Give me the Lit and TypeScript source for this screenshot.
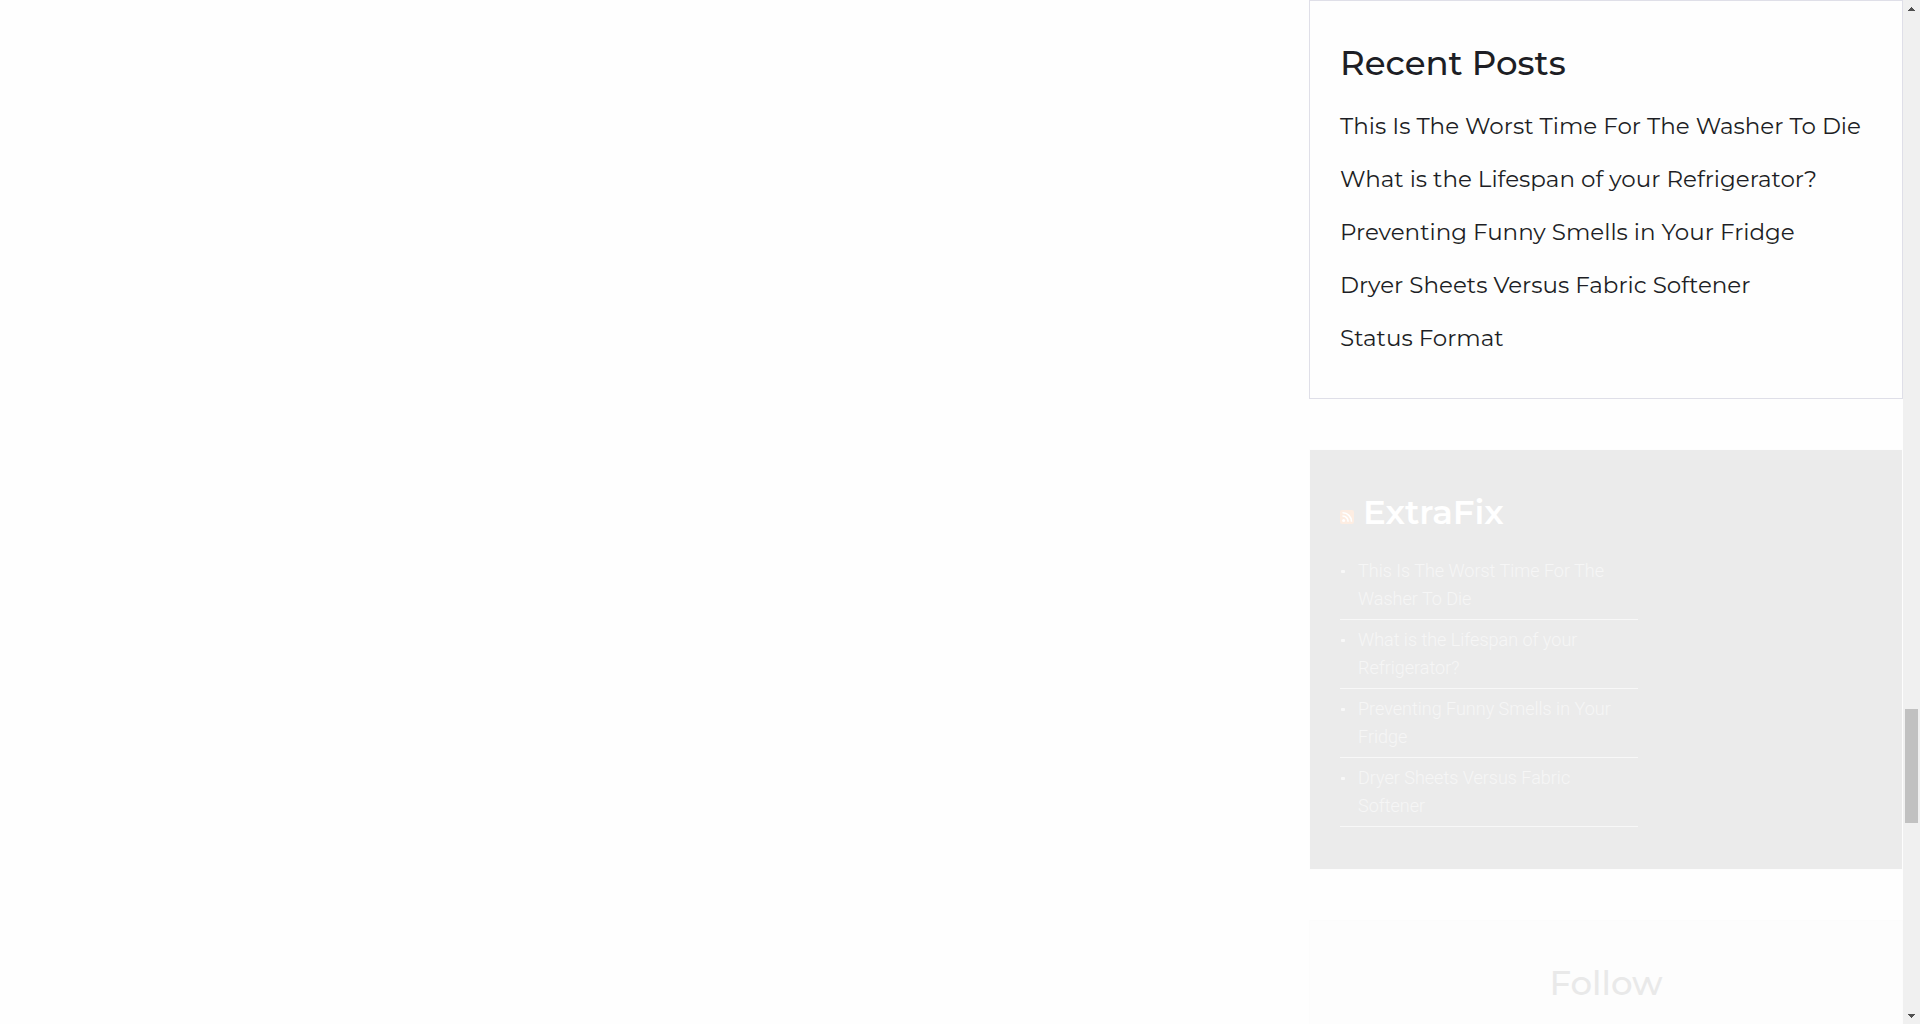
import { LitElement, html, css } from "lit";
import { customElement } from "lit/decorators.js";

const POSTS = [
  "This Is The Worst Time For The Washer To Die",
  "What is the Lifespan of your Refrigerator?",
  "Preventing Funny Smells in Your Fridge",
  "Dryer Sheets Versus Fabric Softener",
  "Status Format",
];

@customElement("scroll-rail")
export class ScrollRail extends LitElement {
  static styles = css`
    :host {
      display: flex;
      flex-direction: column;
      width: 17px;
      background: #f0f0f0;
    }
    .step {
      display: flex;
      justify-content: center;
      align-items: center;
      height: 17px;
      padding: 0;
      border: 0;
      background: none;
    }
    .step svg {
      display: block;
    }
    .before {
      flex: 692 0 0;
    }
    .thumb {
      flex: 114 0 0;
      margin: 0 2px;
      background: #c1c1c1;
    }
    .after {
      flex: 184 0 0;
    }
  `;

  render() {
    return html`
      <button class="step" aria-label="Scroll up">
        <svg width="7" height="4" viewBox="0 0 7 4" shape-rendering="crispEdges">
          <path d="M3 0h1v1h1v1h1v1h1v1H0V3h1V2h1V1h1z" fill="#505050" />
        </svg>
      </button>
      <div class="before"></div>
      <div class="thumb"></div>
      <div class="after"></div>
      <button class="step" aria-label="Scroll down">
        <svg width="7" height="4" viewBox="0 0 7 4" shape-rendering="crispEdges">
          <path d="M0 0h7v1H6v1H5v1H4v1H3V3H2V2H1V1H0z" fill="#505050" />
        </svg>
      </button>
    `;
  }
}

@customElement("app-root")
export class AppRoot extends LitElement {
  static styles = css`
    :host {
      display: flex;
      height: 100vh;
      overflow: hidden;
      background: #fefefe;
      color: #1d1e25;
      font-family: Montserrat, Inter, "Open Sans", sans-serif;
    }
    .page {
      flex: 1;
      min-width: 0;
      display: flex;
      justify-content: flex-end;
    }
    .sidebar {
      box-sizing: border-box;
      width: 594px;
      max-width: 100%;
      display: flex;
      flex-direction: column;
      gap: 50px;
    }
    .card {
      flex: none;
      padding: 40px 30px;
      border: 1px solid #dfdfe8;
    }
    .recent {
      padding-bottom: 33px;
    }
    .title {
      margin: 0;
      font-size: 34px;
      line-height: 44px;
      font-weight: 500;
    }
    .posts {
      margin: 15px 0 0;
      padding: 0;
      list-style: none;
    }
    .post {
      line-height: 53px;
      font-size: 23px;
      font-weight: 450;
      white-space: nowrap;
    }
    a {
      color: inherit;
      text-decoration: none;
    }
    .feed {
      padding-bottom: 42px;
      border-color: #fdfdfd;
      background: #ebebeb;
      background-clip: padding-box;
      color: #ffffff;
    }
    .feed .title {
      display: flex;
      align-items: baseline;
      gap: 9px;
      font-weight: 600;
    }
    .rss {
      display: block;
    }
    .entries {
      width: 56%;
      margin: 17px 0 0;
      padding: 0;
      list-style: none;
      font-family: Roboto, sans-serif;
      font-size: 18px;
      line-height: 28px;
      font-weight: 300;
      color: #f6f6f6;
    }
    .entry {
      display: flex;
      gap: 13px;
      padding: 6px 0;
      border-bottom: 1px solid #f8f8f8;
    }
    .entry::before {
      content: "";
      flex: none;
      width: 4px;
      height: 3px;
      margin: 13px 0 0 1px;
      border-radius: 1px;
      background: #f8f8f8;
    }
    .follow {
      border-color: #fcfcfc;
      background: #fdfdfd;
      color: #e9e9e9;
      text-align: center;
    }
  `;

  render() {
    return html`
      <main class="page">
        <aside class="sidebar">
          <section class="card recent">
            <h2 class="title">Recent Posts</h2>
            <ul class="posts">
              ${POSTS.map((p) => html`<li class="post"><a href="#">${p}</a></li>`)}
            </ul>
          </section>
          <section class="card feed">
            <h2 class="title">
              <a href="#" aria-label="RSS feed"
                ><svg class="rss" width="14" height="14" viewBox="0 0 14 14">
                  <rect width="14" height="14" rx="2" fill="#fdede2" />
                  <circle cx="3.6" cy="10.6" r="1.5" fill="#fff" />
                  <path
                    d="M2.5 6a5.5 5.5 0 0 1 5.6 5.8M2.5 2.8a8.8 8.8 0 0 1 9 9"
                    fill="none"
                    stroke="#fff"
                    stroke-width="1.6"
                  /></svg
              ></a>
              <a href="#">ExtraFix</a>
            </h2>
            <ul class="entries">
              ${POSTS.slice(0, 4).map((p) => html`<li class="entry"><a href="#">${p}</a></li>`)}
            </ul>
          </section>
          <section class="card follow">
            <h2 class="title">Follow</h2>
          </section>
        </aside>
      </main>
      <scroll-rail></scroll-rail>
    `;
  }
}
